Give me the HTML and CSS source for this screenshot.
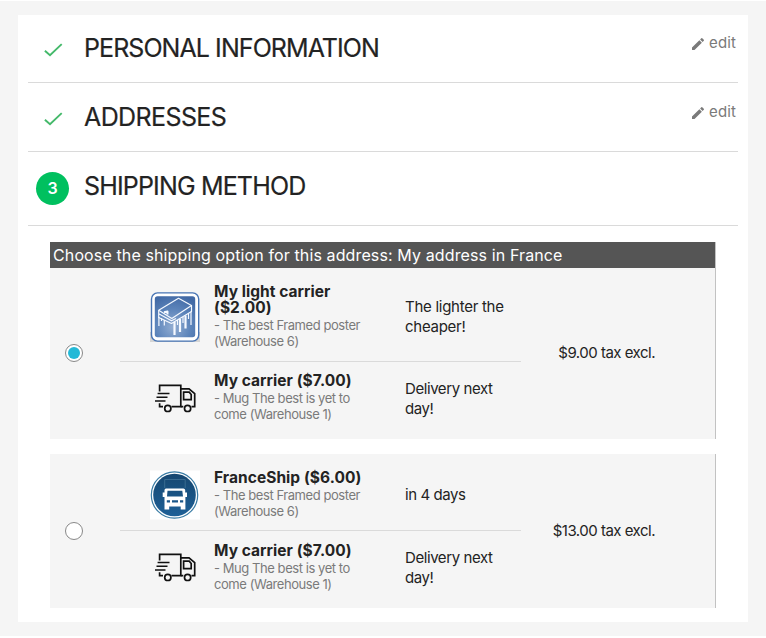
FILE: index.html
```
<!DOCTYPE html>
<html lang="en">
<head>
<meta charset="utf-8">
<title>Checkout</title>
<link rel="stylesheet" href="styles.css">
</head>
<body>
<svg class="defs" aria-hidden="true">
  <symbol id="check" viewBox="0 0 24 24"><path d="M3.9 12.8 9 17.3 20.7 6.1" fill="none" stroke="currentColor" stroke-width="1.9"/></symbol>
  <symbol id="pencil" viewBox="0 0 24 24"><path fill="currentColor" d="M3 17.25V21h3.75L17.81 9.94l-3.75-3.75L3 17.25zM20.71 7.04a1 1 0 0 0 0-1.41l-2.34-2.34a1 1 0 0 0-1.41 0l-1.83 1.83 3.75 3.75 1.83-1.83z"/></symbol>
  <symbol id="truck" viewBox="0 0 50 50">
    <g fill="none" stroke="#111" stroke-width="1.7">
      <path d="M9.6 17.5V11.3H30.8V32.7H21.5M9.6 29.3V32.7H13"/>
      <path d="M30.8 14.8H39L44.7 19.7V32.7H41.5M33.3 32.7H30.8"/>
      <path d="M33.6 18.1H39.2L41.2 20.5V25.7H33.6Z"/>
      <path d="M7.6 19.5H19.5M6.5 23.2H17.5M5 27H15.5" stroke-width="1.6"/>
      <circle cx="17.8" cy="34.4" r="3.1"/><circle cx="37.6" cy="34.4" r="3.1"/>
    </g>
  </symbol>
</svg>
<main class="card">
  <section class="step">
    <svg class="check"><use href="#check"/></svg>
    <h1 class="title t-personal">PERSONAL INFORMATION</h1>
    <a class="edit"><svg class="pencil"><use href="#pencil"/></svg>edit</a>
  </section>
  <section class="step">
    <svg class="check"><use href="#check"/></svg>
    <h1 class="title t-addresses">ADDRESSES</h1>
    <a class="edit"><svg class="pencil"><use href="#pencil"/></svg>edit</a>
  </section>
  <section class="step current">
    <span class="number">3</span>
    <h1 class="title t-shipping">SHIPPING METHOD</h1>
  </section>
  <div class="options">
    <div class="option first">
      <h2 class="caption">Choose the shipping option for this address: My address in France</h2>
      <div class="body">
        <span class="radio on"></span>
        <div class="carriers">
          <div class="carrier tall">
            <svg class="logo" viewBox="0 0 50 50">
              <defs><radialGradient id="ice" cx=".45" cy=".75" r=".8"><stop offset="0" stop-color="#92add2"/><stop offset=".55" stop-color="#5c84ba"/><stop offset="1" stop-color="#4169a5"/></radialGradient></defs>
              <path d="M0 40V50H50V40Z" fill="#d5d5d5"/>
              <rect x="1.5" y=".9" width="47.2" height="48.2" rx="6" fill="#fff" stroke="#4774b4" stroke-width="1.4"/>
              <rect x="4.8" y="4.3" width="40.4" height="41" rx="2.8" fill="url(#ice)"/>
              <g fill="none" stroke="#f5f9ff" stroke-width="1.2" stroke-linejoin="round">
                <path d="M8.7 18.3 28.5 6.3 41.5 13.6 21.8 26.5Z"/>
                <path d="M8.7 18.3V25.5L21.5 31.5 41.5 19.5V13.6M8.7 21.8 21.5 28.8 26 26.5"/>
                <path d="M8.9 25V34M14.3 28V33.5M41 19.5V33"/>
                <path d="M24.5 30V43M30 27V40M35.5 23.5V36.5" stroke-width="2.2"/>
                <path d="M27.5 28V33M33 25V31M38.5 21V27M11.5 26V29" stroke-width="1.2"/>
                <path d="M14 20.2 17.5 19.4V22.5" stroke-width="2"/>
              </g>
            </svg>
            <div class="info"><div class="name">My light carrier<br>($2.00)</div><div class="note">- The best Framed poster<br>(Warehouse 6)</div></div>
            <div class="delay">The lighter the<br>cheaper!</div>
          </div>
          <div class="carrier">
            <svg class="logo"><use href="#truck"/></svg>
            <div class="info"><div class="name">My carrier ($7.00)</div><div class="note">- Mug The best is yet to<br>come (Warehouse 1)</div></div>
            <div class="delay narrow">Delivery next<br>day!</div>
          </div>
        </div>
        <div class="price">$9.00 tax excl.</div>
      </div>
    </div>
    <div class="option second">
      <div class="body">
        <span class="radio"></span>
        <div class="carriers">
          <div class="carrier">
            <svg class="logo" viewBox="0 0 50 50">
              <defs><linearGradient id="navy" x2="0" y2="1"><stop offset="0" stop-color="#164770"/><stop offset="1" stop-color="#1e6097"/></linearGradient></defs>
              <path d="M0 .5H50V49.5H0Z" fill="#fff"/>
              <circle cx="24.5" cy="25" r="23.2" fill="#fff" stroke="#3a7ca5" stroke-width="1.2"/>
              <circle cx="24.5" cy="25" r="21.3" fill="url(#navy)"/>
              <path d="M14.7 18V9.5H35.2V18" fill="none" stroke="#48799b" stroke-width=".7"/>
              <path fill="#fff" fill-rule="evenodd" d="M16 18.5H33.5Q35 18.5 35.2 20V22.5H37V27H35.4V39.5H30.7V36.5H19.2V39.5H14.5V27H12.7V22.5H14.5V20Q14.6 18.5 16 18.5ZM17.5 20.8H32.3L33 26.5H17ZM16.8 30.2H20V32.5H16.8ZM22 30.2H28V32.5H22ZM30 30.2H33.2V32.5H30Z"/>
            </svg>
            <div class="info"><div class="name">FranceShip ($6.00)</div><div class="note">- The best Framed poster<br>(Warehouse 6)</div></div>
            <div class="delay narrow">in 4 days</div>
          </div>
          <div class="carrier">
            <svg class="logo"><use href="#truck"/></svg>
            <div class="info"><div class="name">My carrier ($7.00)</div><div class="note">- Mug The best is yet to<br>come (Warehouse 1)</div></div>
            <div class="delay narrow">Delivery next<br>day!</div>
          </div>
        </div>
        <div class="price">$13.00 tax excl.</div>
      </div>
    </div>
  </div>
</main>
</body>
</html>
```
FILE: styles.css
```
* { box-sizing: border-box; }
html { background: #fff; }
body {
  margin: 1px 0 0;
  height: 635px;
  padding: 14px 18px;
  background: #f5f5f5;
  color: #232323;
  font: 15px/20px Inter, "Liberation Sans", sans-serif;
}
.defs { position: absolute; width: 0; height: 0; }
.card { height: 607px; padding: 0 10px; background: #fff; }
.step {
  display: flex;
  align-items: flex-start;
  height: 69px;
  padding: 16px 2px 0 8px;
  border-bottom: 1px solid #dadada;
}
.step:first-child { height: 68px; padding-top: 15px; }
.step.current { height: 74px; }
.check { width: 24px; height: 24px; margin: 8px 20px 0 5px; color: #44b96a; }
.number {
  width: 33px;
  height: 33px;
  margin: 4px 15px 0 0;
  border-radius: 50%;
  background: #00c05f;
  color: #fff;
  font-size: 16px;
  font-weight: 600;
  line-height: 33px;
  text-align: center;
}
.title { flex: 1; margin: 0; font-size: 25px; font-weight: 400; line-height: 36px; -webkit-text-stroke: .2px; white-space: nowrap; }
.step:not(.current) .title { margin-left: -1px; }
.t-personal { letter-spacing: -.93px; }
.t-addresses { letter-spacing: -.6px; }
.t-shipping { letter-spacing: -.84px; }
.edit { display: flex; align-items: center; gap: 3px; margin-top: 3px; color: #7a7a7a; letter-spacing: .13px; }
.pencil { width: 16px; height: 16px; margin-top: 2px; }

.options { width: 666px; margin: 16px 0 0 22px; display: grid; gap: 15px; }
.option { border-right: 1px solid #c2c2c2; background: #f5f5f5; }
.caption {
  margin: 0;
  padding-left: 3px;
  height: 26px;
  background: #555;
  color: #fff;
  font-size: 16px;
  font-weight: 400;
  line-height: 26px;
  letter-spacing: .12px;
  white-space: nowrap;
}
.body { display: grid; grid-template-columns: 70px 401px 1fr; align-items: center; }
.first .radio, .first .price { margin-bottom: 1px; }
.radio {
  display: grid;
  place-items: center;
  width: 18px;
  height: 18px;
  margin-left: 15px;
  border: 1px solid #888;
  border-radius: 50%;
  background: #fff;
}
.radio.on::after { content: ""; width: 12px; height: 12px; border-radius: 50%; background: #24b9d7; }
.carrier {
  display: grid;
  grid-template-columns: 50px 177px 1fr;
  column-gap: 14px;
  align-items: center;
  height: 77px;
  padding-left: 30px;
}
.carrier:first-child { padding-top: 5px; border-bottom: 1px solid #dadada; }
.carrier:last-child { padding-bottom: 4px; }
.carrier.tall { height: 94px; }
.first .info { margin-bottom: 2px; }
.logo { display: block; width: 50px; height: 50px; }
.name { font-size: 15.5px; font-weight: 700; line-height: 16px; letter-spacing: .05px; white-space: nowrap; }
.note { margin-top: 1px; color: #7a7a7a; font-size: 13px; line-height: 16px; letter-spacing: -.44px; white-space: nowrap; }
.delay { letter-spacing: -.27px; white-space: nowrap; }
.delay.narrow { letter-spacing: -.42px; }
.price { padding-right: 60px; text-align: right; letter-spacing: -.5px; white-space: nowrap; }
```
